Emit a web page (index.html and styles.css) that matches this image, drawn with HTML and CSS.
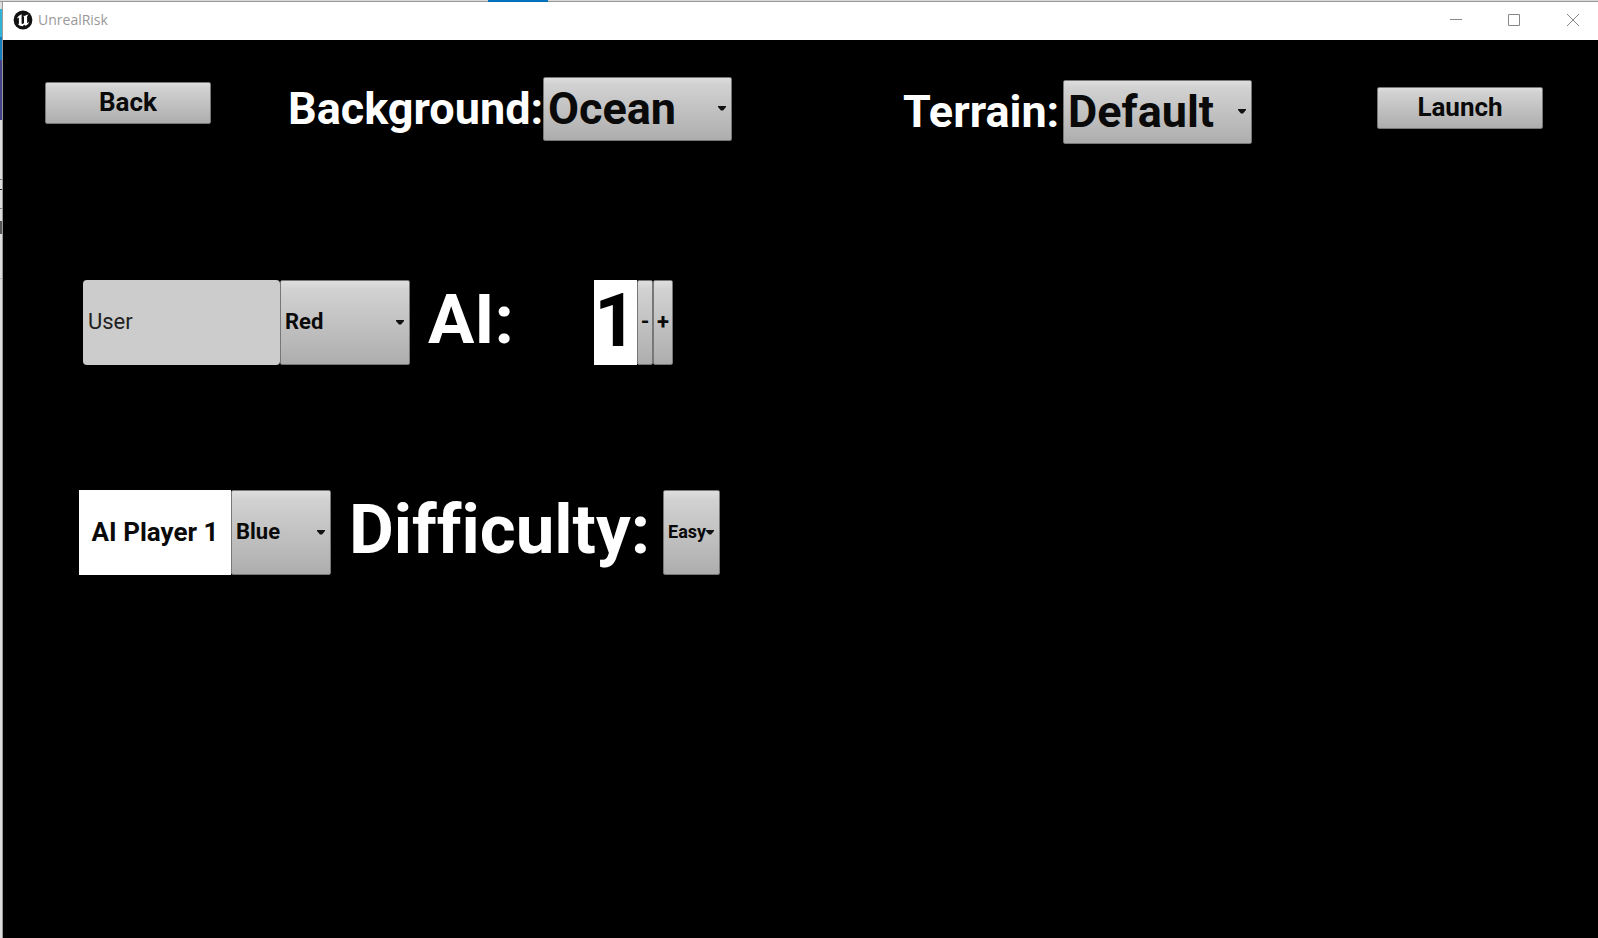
FILE: index.html
```html
<!DOCTYPE html>
<html lang="en">
<head>
<meta charset="utf-8">
<title>UnrealRisk</title>
<link rel="stylesheet" href="styles.css">
</head>
<body>
<div class="desktop">
  <div class="desktop-top"></div>
  <div class="desktop-side"></div>
  <div class="window">
    <header class="titlebar">
      <svg class="logo" viewBox="0 0 20 20" aria-hidden="true">
        <circle cx="10" cy="10" r="9.4" fill="#111"/>
        <path d="M8.9 4.2C6.400 4.900 4.400 6.600 3.900 8.900C4.700 7.900 5.700 7.500 5.900 8.200V13.200C5.900 14 5.500 14.200 5 14.100C6 15.600 7.700 16.300 9.600 16.300L11.200 14.800L12.500 15.800C14.300 15 15.700 13.600 16.200 11.800C15.300 12.800 14.300 13.300 14.100 12.600V6.900C14.100 6 14.800 5.200 15.600 4.400C14 4.500 12.700 5 11.700 5.900C11.100 5.700 10.700 5.700 10.200 5.900C10.700 6.100 11 6.500 11 7V12.900C10.500 13.600 9.700 14 9.200 13.900C8.700 13.800 8.600 13.500 8.600 13V6.300C8.600 5.500 8.500 4.900 8.900 4.200Z" fill="#fff"/>
      </svg>
      <h1 class="title">UnrealRisk</h1>
      <div class="window-controls">
        <button class="window-btn" type="button" aria-label="Minimize"><svg viewBox="0 0 12 12"><path d="M0 5.500H12"/></svg></button>
        <button class="window-btn" type="button" aria-label="Maximize"><svg viewBox="0 0 12 12"><path d="M.5 .5H11.500V11.500H.5Z"/></svg></button>
        <button class="window-btn" type="button" aria-label="Close"><svg viewBox="0 0 12 12"><path d="M0 0L12 12M12 0L0 12"/></svg></button>
      </div>
    </header>
    <main class="game">
      <div class="toolbar">
        <button class="btn back" type="button">Back</button>
        <div class="field background">
          <label class="label-md" for="background">Background:</label>
          <div class="combo combo-lg">
            <select id="background"><option>Ocean</option></select>
            <svg class="arrow" viewBox="0 0 8 5" aria-hidden="true"><path d="M0 0H8V1L5 4.500H3L0 1Z"/></svg>
          </div>
        </div>
        <div class="field terrain">
          <label class="label-md" for="terrain">Terrain:</label>
          <div class="combo combo-lg">
            <select id="terrain"><option>Default</option></select>
            <svg class="arrow" viewBox="0 0 8 5" aria-hidden="true"><path d="M0 0H8V1L5 4.500H3L0 1Z"/></svg>
          </div>
        </div>
        <button class="btn launch" type="button">Launch</button>
      </div>
      <div class="player-row user-row">
        <input class="name-input" type="text" value="User" aria-label="Player name">
        <div class="combo user-color">
          <select aria-label="Player color"><option>Red</option></select>
          <svg class="arrow" viewBox="0 0 8 5" aria-hidden="true"><path d="M0 0H8V1L5 4.500H3L0 1Z"/></svg>
        </div>
        <span class="label-lg ai-label">AI:</span>
        <output class="count">1</output>
        <button class="btn step minus" type="button" aria-label="Fewer AI players">-</button>
        <button class="btn step plus" type="button" aria-label="More AI players">+</button>
      </div>
      <div class="player-row ai-row">
        <div class="ai-name">AI Player 1</div>
        <div class="combo ai-color">
          <select aria-label="AI Player 1 color"><option>Blue</option></select>
          <svg class="arrow" viewBox="0 0 8 5" aria-hidden="true"><path d="M0 0H8V1L5 4.500H3L0 1Z"/></svg>
        </div>
        <label class="label-lg difficulty-label" for="difficulty">Difficulty:</label>
        <div class="combo combo-sm difficulty">
          <select id="difficulty"><option>Easy</option></select>
          <svg class="arrow" viewBox="0 0 8 5" aria-hidden="true"><path d="M0 0H8V1L5 4.500H3L0 1Z"/></svg>
        </div>
      </div>
    </main>
  </div>
</div>
</body>
</html>
```

FILE: styles.css
```css
* { box-sizing: border-box; }

body {
  margin: 0;
  background: #000;
  font-family: Roboto, "Liberation Sans", sans-serif;
  font-variant-ligatures: none;
}

button, input, select { margin: 0; font-family: inherit; }

.desktop {
  display: grid;
  grid-template-columns: 3px 1fr;
  grid-template-rows: 2px 1fr;
  min-height: 100vh;
}

.desktop-top {
  grid-column: 1 / -1;
  background:
    linear-gradient(#0078c8, #0067b0) 488px 0 / 60px 2px no-repeat,
    linear-gradient(#d9d9d9 50%, #999 50%);
}

.desktop-side {
  border-right: 1px solid #999;
  background: linear-gradient(
    #ddd 7px, #2fb4d8 7px 35px, #147bbd 35px 58px, #454389 58px 118px,
    #ddd 118px 177px, #777 177px 178px, #ddd 178px 187px, #222 187px 188px,
    #ddd 188px 206px, #888 206px 207px, #ddd 207px 219px, #555 219px 232px,
    #ddd 232px 276px, #bbb 276px 277px, #ddd 277px);
}

.window {
  display: flex;
  flex-direction: column;
  min-width: 0;
}

.titlebar {
  display: flex;
  align-items: center;
  height: 38px;
  padding: 0 0 2px 10px;
  background: #fff;
}

.logo { width: 20px; height: 20px; }

.title {
  margin: 0 0 0 5px;
  color: #999;
  font: 400 14px/20px "Open Sans", sans-serif;
}

.window-controls { display: flex; margin-left: auto; }

.window-btn {
  display: grid;
  place-items: center;
  width: 58px;
  height: 36px;
  padding: 0;
  border: 0;
  background: none;
}

.window-btn:last-child { width: 55px; padding-left: 5px; }

.window-btn svg {
  width: 12px;
  height: 12px;
  fill: none;
  stroke: #888;
}

.game { flex: 1; background: #000; }

.toolbar {
  display: grid;
  grid-template-columns: 243fr 615fr 474fr 221fr;
  align-items: start;
  height: 240px;
  padding: 37px 0 0 42px;
}

.btn, .combo select {
  border: 1px solid #777;
  border-radius: 2px;
  background: linear-gradient(#dedede, #d2d2d2 10%, #b2b2b2 90%, #acacac);
  color: #0a0a0a;
  font-weight: 700;
}

.btn {
  width: 166px;
  height: 42px;
  padding: 0 0 2px;
  font-size: 26px;
  line-height: 30px;
}

.back { margin-top: 5px; }
.launch { margin-top: 10px; }

.field { display: flex; align-items: center; }
.terrain { margin-top: 3px; }

.label-md {
  color: #fff;
  font-size: 45px;
  font-weight: 700;
  line-height: 56px;
}

.background .label-md { width: 255px; }
.terrain .label-md { width: 160px; }

.combo { position: relative; }

.combo select {
  display: block;
  appearance: none;
  width: 100%;
  height: 85px;
  padding: 0 4px 2px;
  font-size: 22px;
}

.combo-lg { width: 189px; }
.combo-lg select { height: 64px; font-size: 45px; }
.combo-sm select { font-size: 18px; }

.arrow {
  position: absolute;
  top: 50%;
  right: 6px;
  width: 8px;
  height: 5px;
  margin-top: -3px;
  fill: #111;
  pointer-events: none;
}

.player-row {
  display: flex;
  align-items: center;
  height: 85px;
}

.user-row { padding-left: 80px; }
.ai-row { margin-top: 125px; padding-left: 76px; }

.name-input {
  width: 197px;
  height: 85px;
  padding: 0 5px 2px;
  border: 0;
  border-radius: 4px;
  background: #ccc;
  color: #222;
  font-size: 22px;
}

.user-color { width: 130px; }
.ai-color { width: 100px; }

.label-lg {
  padding-bottom: 6px;
  color: #fff;
  font-size: 69px;
  font-weight: 700;
  line-height: 79px;
}

.ai-label { width: 166px; margin-left: 18px; }
.difficulty-label { width: 310px; margin-left: 18px; }
.difficulty { width: 57px; margin-left: 4px; }

.count {
  width: 43px;
  height: 85px;
  background: #fff;
  color: #000;
  font-size: 74px;
  font-weight: 700;
  line-height: 82px;
  text-align: center;
}

.step { height: 85px; font-size: 22px; }
.minus { width: 16px; }
.plus { width: 20px; }

.ai-name {
  width: 152px;
  height: 85px;
  background: #fff;
  color: #0a0a0a;
  font-size: 26px;
  font-weight: 700;
  line-height: 85px;
  text-align: center;
}
```
